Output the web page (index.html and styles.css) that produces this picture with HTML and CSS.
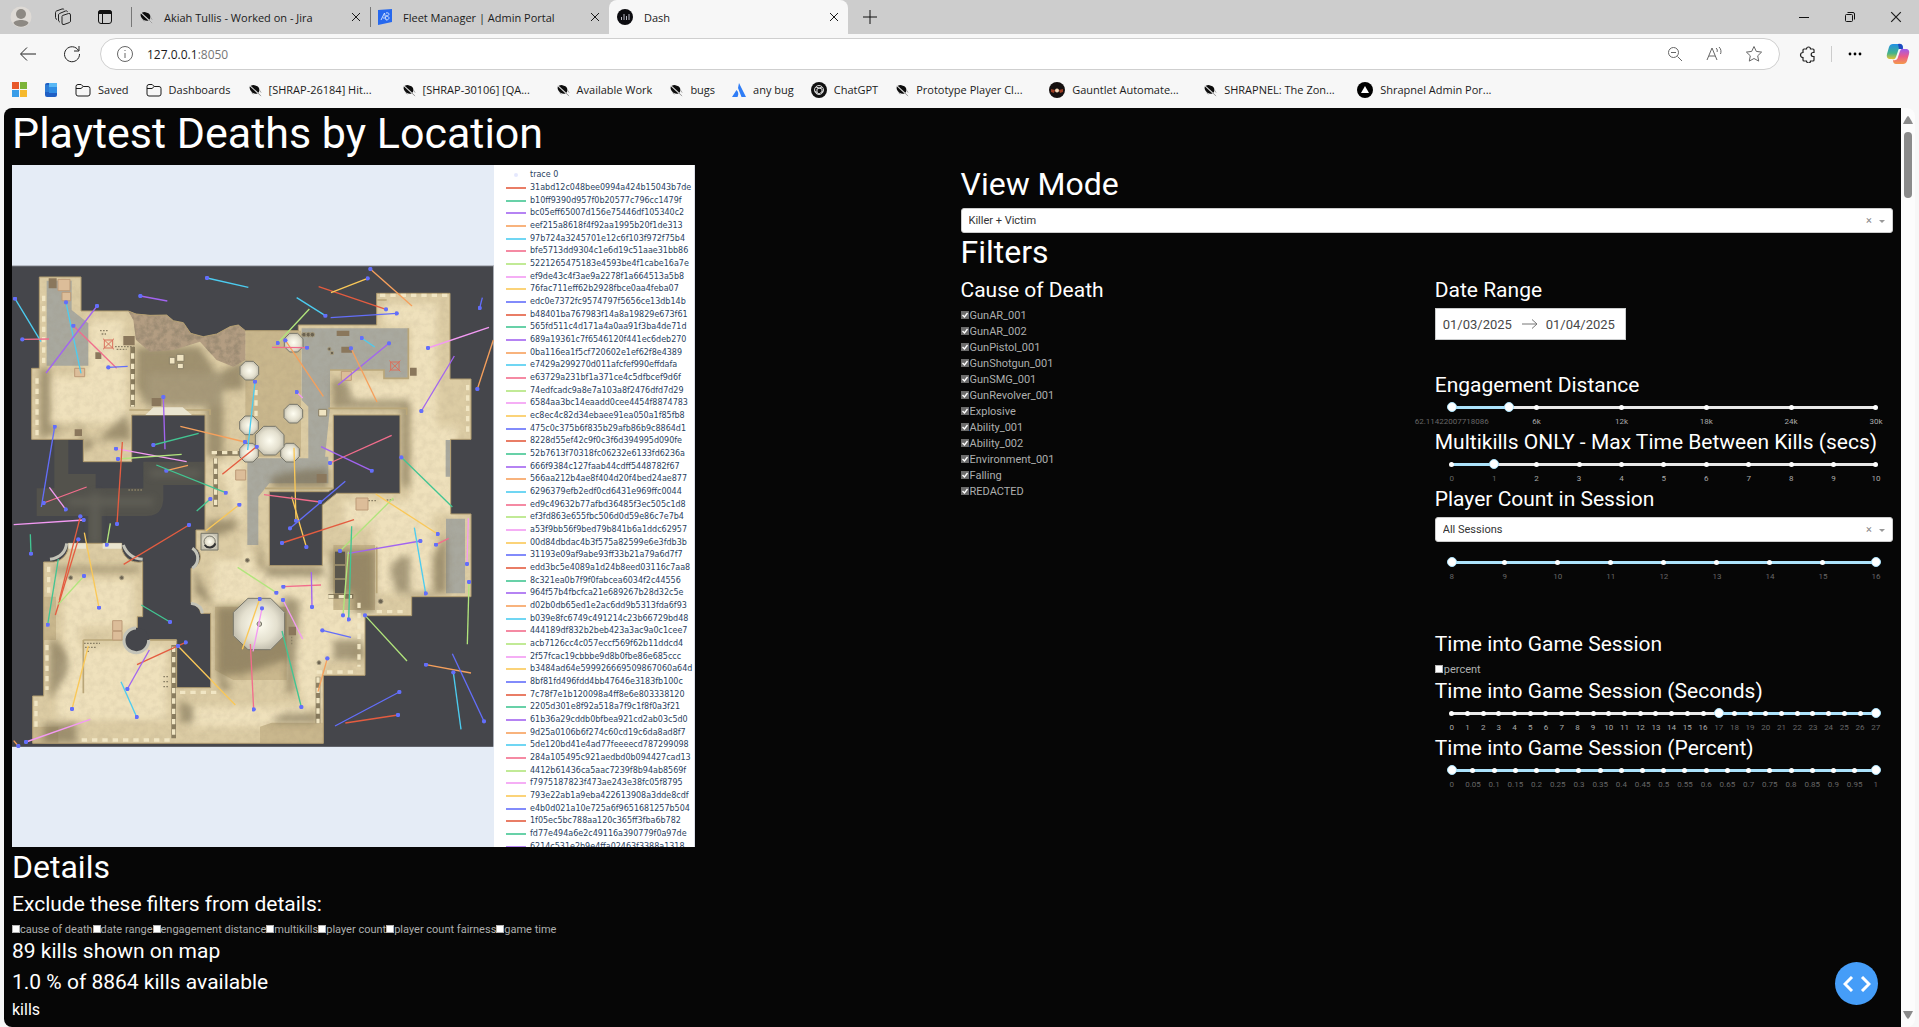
FILE: index.html
```html
<!DOCTYPE html>
<html lang="en">
<head>
<meta charset="utf-8">
<title>Dash</title>
<link rel="stylesheet" href="styles.css">
</head>
<body>
<svg class="defs" aria-hidden="true">
  <defs>
    <symbol id="close" viewBox="0 0 10 10"><path d="M1 1l8 8M9 1l-8 8" stroke="currentColor" fill="none"/></symbol>
    <symbol id="folder" viewBox="0 0 16 16"><path d="M1 4.500a2 2 0 0 1 2-2h3.200l2 2H13a2 2 0 0 1 2 2v5.500a2 2 0 0 1-2 2H3a2 2 0 0 1-2-2zM1 6.500h5l2.200-2" stroke="currentColor" fill="none"/></symbol>
    <symbol id="shard" viewBox="0 0 16 16"><path d="M2 4q3-3 7-1 4 1 4 5 0 3-2 4-3 1-6-1-4-3-3-7z" fill="#0d0d0d"/><path d="M2 3l12 11" stroke="#ddd" stroke-width="1.200"/><path d="M11 11l4 4M4 11l2 2M13 8l2 3" stroke="#999" fill="none"/></symbol>
  </defs>
</svg>
<header class="chrome">
  <div class="tabbar">
    <button class="icon-btn" aria-label="Profile"><svg width="22" height="22" viewBox="0 0 22 22"><circle cx="11" cy="11" r="10.500" fill="#dedad5"/><circle cx="11" cy="8" r="5" fill="#8d8983"/><path d="M3.500 17c1-4 14-4 15 0-3 5-12 5-15 0" fill="#8d8983"/></svg></button>
    <button class="icon-btn" aria-label="Workspaces"><svg width="18" height="18" viewBox="0 0 18 18" fill="none" stroke="#222"><path d="M8.500 7.500l6-2q2-.5 2 1.500v6q0 1-1 1.500l-5.500 2q-2 .5-2-1.500V8.500q0-.7.500-1zM6 14l-.5-.2Q4.500 13.500 4.500 12V7q0-1 1-1.500l6-2.500q1.500-.5 2.200.8M3 11.500Q1.500 11 1.500 9.500v-5q0-1 1-1.500l5.500-2q1.500-.5 2.200.8"/></svg></button>
    <button class="icon-btn" aria-label="Tab actions"><svg width="16" height="16" viewBox="0 0 16 16"><rect x="1.500" y="1.500" width="13" height="13" rx="2.500" fill="none" stroke="#111"/><path d="M1 4q0-3 3-3h8q3 0 3 3v1H1z" fill="#111"/><path d="M5.500 5v10" stroke="#111"/></svg></button>
    <div class="tab tab-line"><svg width="14" height="14"><use href="#shard"/></svg><span>Akiah Tullis - Worked on - Jira</span><button aria-label="Close tab"><svg width="10" height="10"><use href="#close"/></svg></button></div>
    <div class="tab tab-line"><svg width="14" height="16" viewBox="0 0 14 16"><path d="M0 1l14-1v13L0 16z" fill="#2668ee"/><path d="M3 11l3.500-7L8 11M5 9h2M8 4c4-1 4 3 0 3 4 0 4 4 0 4" stroke="#cfe0ff" fill="none"/></svg><span>Fleet Manager | Admin Portal</span><button aria-label="Close tab"><svg width="10" height="10"><use href="#close"/></svg></button></div>
    <div class="tab tab-active"><svg width="16" height="16" viewBox="0 0 16 16"><circle cx="8" cy="8" r="8" fill="#0c0c10"/><path d="M4.500 11V8M7 11V5M9.500 11V7M12 11V5" stroke="#b9b9c4"/></svg><span>Dash</span><button aria-label="Close tab"><svg width="10" height="10"><use href="#close"/></svg></button></div>
    <button class="new-tab" aria-label="New tab"><svg width="14" height="14" viewBox="0 0 14 14"><path d="M7 0v14M0 7h14" stroke="#111"/></svg></button>
    <div class="window-controls">
      <button aria-label="Minimize"><svg width="12" height="12" viewBox="0 0 12 12"><path d="M1 6.500h10" stroke="#111"/></svg></button>
      <button aria-label="Restore"><svg width="12" height="12" viewBox="0 0 12 12" fill="none" stroke="#111"><rect x="1.500" y="3.500" width="7" height="7" rx="1"/><path d="M3.500 1.500H9A1.500 1.500 0 0 1 10.500 3v5.500"/></svg></button>
      <button aria-label="Close"><svg width="12" height="12"><use href="#close"/></svg></button>
    </div>
  </div>
  <div class="toolbar">
    <button aria-label="Back"><svg width="18" height="16" viewBox="0 0 18 16"><path d="M17 8H2M8 1.500L1.500 8 8 14.500" fill="none" stroke="#222"/></svg></button>
    <button aria-label="Refresh"><svg width="18" height="18" viewBox="0 0 18 18"><path d="M15.500 5.500A7.500 7.500 0 1 0 16.500 9M16 1v5h-5" fill="none" stroke="#222"/></svg></button>
    <div class="address">
      <svg width="16" height="16" viewBox="0 0 16 16" fill="none" stroke="#666"><circle cx="8" cy="8" r="7.500"/><path d="M8 7v5M8 4v1"/></svg>
      <span class="url">127.0.0.1<span>:8050</span></span>
      <svg width="16" height="16" viewBox="0 0 16 16" fill="none" stroke="#666"><circle cx="6.500" cy="6.500" r="5"/><path d="M4 6.500h5M10.500 10.500L15 15"/></svg>
      <svg width="18" height="16" viewBox="0 0 18 16" fill="none" stroke="#666"><path d="M2 14L7 2l5 12M4 10h6M11 2c1.500 1.200 1.500 3 1 4M14 1c2.300 2 2.300 5 1.500 7"/></svg>
      <svg width="18" height="18" viewBox="0 0 18 18" fill="none" stroke="#666"><path d="M9 1.500l2.300 4.900 5.300.7-3.900 3.700 1 5.300L9 13.500l-4.700 2.600 1-5.300L1.400 7.100l5.300-.7z"/></svg>
    </div>
    <button aria-label="Extensions"><svg width="18" height="18" viewBox="0 0 18 18"><path d="M5 4h2.500a2 2 0 0 1 4 0H14q1 0 1 1v2.500h-.8a1.800 1.800 0 0 0 0 4h.8V15q0 1-1 1h-2.500a2 2 0 0 1-4 0H5q-1 0-1-1v-2.500a2.500 2.500 0 0 1 0-5V5q0-1 1-1z" fill="none" stroke="#222" stroke-width="1.200"/></svg></button>
    <i class="rule"></i>
    <button aria-label="Settings and more"><svg width="14" height="4" viewBox="0 0 14 4"><circle cx="2" cy="2" r="1.400"/><circle cx="7" cy="2" r="1.400"/><circle cx="12" cy="2" r="1.400"/></svg></button>
    <button aria-label="Copilot"><svg width="24" height="22" viewBox="0 0 24 22"><defs><linearGradient id="cpa" x1="0" y1="0" x2="0" y2="1"><stop offset="0" stop-color="#2190e6"/><stop offset=".6" stop-color="#43b38a"/><stop offset="1" stop-color="#e8c432"/></linearGradient><linearGradient id="cpb" x1="0" y1="0" x2="0" y2="1"><stop offset="0" stop-color="#9a5cf0"/><stop offset=".5" stop-color="#ea5a8c"/><stop offset="1" stop-color="#f59a4a"/></linearGradient></defs><path d="M7 1h7q3 0 3 4-4-1-5 3l-2 6q-1 3-4 2H3q-3-1-2-5l2-7q1-3 4-3z" fill="url(#cpa)"/><path d="M12 1q5-1 5 5h-4z" fill="#1f49c0"/><path d="M17 21h-7q-3 0-3-4 4 1 5-3l2-6q1-3 4-2h3q3 1 2 5l-2 7q-1 3-4 3z" fill="url(#cpb)"/></svg></button>
  </div>
  <nav class="bookmarks" aria-label="Favorites">
    <a href="#" aria-label="Microsoft"><svg width="15" height="15" viewBox="0 0 15 15"><path d="M0 0h7v7H0z" fill="#e8592b"/><path d="M8 0h7v7H8z" fill="#7cb338"/><path d="M0 8h7v7H0z" fill="#3a9de8"/><path d="M8 8h7v7H8z" fill="#f6b92d"/></svg></a>
    <a href="#" aria-label="Device"><svg width="14" height="16" viewBox="0 0 14 16"><rect x="1" y="1" width="12" height="14" rx="2" fill="#1f5fc4"/><path d="M5 1h8v4H5z" fill="#59b8f5"/><path d="M5 5h8v6H5z" fill="#2f8de4"/><path d="M1 3h4v7H1z" fill="#2d7bd4"/></svg></a>
    <a href="#"><svg width="16" height="16"><use href="#folder"/></svg>Saved</a>
    <a href="#"><svg width="16" height="16"><use href="#folder"/></svg>Dashboards</a>
    <a href="#" class="long"><svg width="14" height="14"><use href="#shard"/></svg>[SHRAP-26184] Hit...</a>
    <a href="#" class="long"><svg width="14" height="14"><use href="#shard"/></svg>[SHRAP-30106] [QA...</a>
    <a href="#"><svg width="14" height="14"><use href="#shard"/></svg>Available Work</a>
    <a href="#"><svg width="14" height="14"><use href="#shard"/></svg>bugs</a>
    <a href="#"><svg width="14" height="14" viewBox="0 0 14 14"><path d="M7 0l7 14H9.500L6 5zM4.500 7q3 3 1 7H0z" fill="#2f7df6"/></svg>any bug</a>
    <a href="#"><svg width="16" height="16" viewBox="0 0 16 16"><circle cx="8" cy="8" r="8" fill="#111"/><g fill="none" stroke="#ddd"><circle cx="8" cy="8" r="4.500"/><path d="M5 5l6 2v4M11 5L6 7v5M4 9l4 3 4-3"/></g></svg>ChatGPT</a>
    <a href="#" class="long"><svg width="14" height="14"><use href="#shard"/></svg>Prototype Player Cl...</a>
    <a href="#" class="long"><svg width="16" height="16" viewBox="0 0 16 16"><circle cx="8" cy="8" r="8" fill="#151010"/><path d="M2 7l4 1-1 3-3-1zM14 7l-4 1 1 3 3-1z" fill="#9b3b22"/><circle cx="8" cy="8.500" r="2" fill="#f6d7b8"/></svg>Gauntlet Automate...</a>
    <a href="#" class="long"><svg width="14" height="14"><use href="#shard"/></svg>SHRAPNEL: The Zon...</a>
    <a href="#"><svg width="16" height="16" viewBox="0 0 16 16"><circle cx="8" cy="8" r="8"/><path d="M8 4l4 7H4z" fill="#fff"/></svg>Shrapnel Admin Por...</a>
  </nav>
</header>
<div class="viewport">
<main class="page">
  <h1>Playtest Deaths by Location</h1>
  <div class="columns">
    <section class="left">
      <div class="figure">
        <svg class="map" viewBox="36 15 1446 2043" role="img" aria-label="Map of kills by location">
          <defs>
            <marker id="dot" viewBox="-6 -6 12 12" markerWidth="13" markerHeight="13" markerUnits="userSpaceOnUse"><circle r="6" fill="#636efa"/></marker>
            <filter id="soft" x="-20%" y="-20%" width="140%" height="140%"><feGaussianBlur stdDeviation="11"/></filter>
            <filter id="rough" x="0" y="0" width="100%" height="100%"><feTurbulence type="fractalNoise" baseFrequency=".05" numOctaves="4"/><feColorMatrix values="0 0 0 0 .3  0 0 0 0 .24  0 0 0 0 .16  0 2 0 0 -.75"/><feComposite in2="SourceGraphic" operator="in"/></filter>
            <radialGradient id="domefill"><stop offset="0" stop-color="#fffef2"/><stop offset=".7" stop-color="#e4e0cf"/><stop offset="1" stop-color="#c6c2b2"/></radialGradient>
            <path id="land" fill-rule="evenodd" d="M118 351H243V453H385L408 462 450 466 500 465 520 482 550 488 572 520 610 530 650 522 690 500 715 495 736 512H895V495H1130V400H1350V657H1413V838H1352V1062H1413V1310H1235V1367H1095V1546H970V1750H98V1608H131V1206H150A50 50 0 0 0 205 1150H365A50 50 0 0 0 428 1205V1370H412V1440H530V1583H632V1360H603A40 40 0 0 0 573 1330V1225A34 34 0 0 0 588 1165V1110H615V765H395V905H250V838H95V625H118ZM1000 765H1200V1000H1010L967 1035V1217H808V995H985L1000 985Z"/>
            <clipPath id="landclip"><path clip-rule="evenodd" d="M118 351H243V453H385L408 462 450 466 500 465 520 482 550 488 572 520 610 530 650 522 690 500 715 495 736 512H895V495H1130V400H1350V657H1413V838H1352V1062H1413V1310H1235V1367H1095V1546H970V1750H98V1608H131V1206H150A50 50 0 0 0 205 1150H365A50 50 0 0 0 428 1205V1370H412V1440H530V1583H632V1360H603A40 40 0 0 0 573 1330V1225A34 34 0 0 0 588 1165V1110H615V765H395V905H250V838H95V625H118ZM1000 765H1200V1000H1010L967 1035V1217H808V995H985L1000 985Z"/></clipPath>
          </defs>
          <rect x="36" y="15" width="1446" height="2043" fill="#e5ecf6"/>
          <path d="M36 316H1482V1760H36z" fill="#a9adb5"/>
          <path d="M36 319H1479V1760H36z" fill="#45464b"/>
          <path d="M163 835H205V942H287V985H430V905H615V975H490V1020Q486 1068 440 1068H305V1155H265V1068H110V985H163Z" fill="#53524c"/>
          <path d="M205 1025H460M285 1000V1150M450 940H600" stroke="#69675d" stroke-width="24" opacity=".6" filter="url(#soft)"/>
          <use href="#land" fill="#dccca4"/>
          <g clip-path="url(#landclip)">
            <g fill="#efe1bc" filter="url(#soft)"><path d="M270 480H370V620H380V790H150V650H260zM440 640H670V740H440zM1150 430H1310V800H1370V1060H1230V740H1020V660H1230V500H1150zM190 1260H400V1400H240V1460H500V1680H170V1500H190zM650 900H730V1200H640V1330H780V1230H960V1200H1120V1100H1030V1020H1300V1300H1130V1460H960V1640H560V1700H940M870 1300H1060V1500H870z"/></g>
            <g fill="#c9b78d"><path d="M736 512H903V890H736zM645 1340H860V1560H700L645 1530zM780 1700L815 1688H970V1750H780zM1000 1155H1125V1350H1000zM98 1700H175V1750H98zM131 1310H168V1440H131z"/></g>
            <g fill="#a9a99f"><path d="M140 362H215V450L265 490V617H140zM905 505H1225V657H1152V630H990V745L975 890H985V970H808L775 1010V1155H742V895H925V740L905 720zM1338 1076H1395V1300H1338zM1337 840H1352V950H1337z"/></g>
            <g fill="#776a4e" opacity=".6" filter="url(#soft)"><path d="M408 560L600 560 650 640 735 600 730 690 670 690V890H620V740H440L408 680zM995 660H1040L1060 720H1230V980H1205V745H1000zM120 625H150V800H250V840H395L380 760 250 880 235 790 120 835zM775 1130V1220H970V1250H800zM1170 1230Q1190 1180 1230 1190V1310H1300V1190L1340 1120V1300H1190zM160 1220H420V1235H160zM990 1170H1125V1360H1060V1300H990zM810 960Q830 930 985 925V985H820zM585 1300V1225L640 1340H850V1310L900 1320 880 1600H860V1500L720 1545H650V1340H640zM170 1440Q230 1500 190 1560L150 1620V1440zM130 1690H230V1750H130zM540 1690H580V1640L540 1620zM1000 1440H1090V1500H1000zM810 1690L850 1660H950V1690zM655 1530L700 1590H660zM620 1080H720L700 1110 620 1140z"/></g>
            <path d="M385 453L450 466 500 465 520 482 550 488 572 520 610 530 650 522 690 500 715 495 736 512V600L700 620 650 600 600 545 520 570 450 575 408 540 400 480Z" fill="#b39d82"/>
            <path d="M385 453L450 466 500 465 520 482 550 488 572 520 610 530 650 522 690 500 715 495 736 512V600L700 620 650 600 600 545 520 570 450 575 408 540 400 480Z" filter="url(#rough)"/>
            <path d="M90 340H1420V1760H90z" filter="url(#rough)" opacity=".12"/>
          </g>
          <use href="#land" fill="none" stroke="#b09c70" stroke-width="3"/>
          <g fill="none" stroke="#6f6348" stroke-width="14" opacity=".75"><path d="M398 560V740M647 895V1040M521 1455V1735M954 1550V1690M985 1309H1060M647 880H720"/></g>
          <g fill="none" stroke="#b9a679" stroke-width="5"><path d="M388 750H630V765M985 745H1220V765M1132 420H1160M990 630H1152V655H1225V505M250 1440H530M250 1440V1600M795 985H1000M1130 1160V1300"/></g>
          <g fill="none" stroke="#f1e6c4" stroke-width="10" stroke-dasharray="16 15"><path d="M131 407V610M111 655V830M398 580V740M768 690V780M1403 675V820M647 895V1040M1140 406H1345M146 1220V1310M141 1455V1590M108 1622V1705M521 1460V1735M245 1740H510M1077 1328V1520M950 1536H1062M954 1552V1690M540 1597H655M985 1310H1056M1130 1355H1215M635 878H715"/></g>
          <circle cx="410" cy="1441" r="38" fill="#45464b"/>
          <g fill="none" stroke="#c3c3b8" stroke-width="9"><path d="M150 1198Q195 1190 200 1150M370 1155Q385 1195 428 1198M408 1404A37 37 0 1 0 446 1440M577 1165A36 36 0 0 1 577 1225M573 1330Q605 1335 607 1360"/></g>
          <path d="M205 1150H258V1166H205zM308 1150H365V1166H308zM436 765L460 742H548L576 765z" fill="#e9e4cf"/>
          <path d="M1005 1175H1035V1300H1005z" fill="#5a564c"/><path d="M1005 1215H1035M1005 1257H1035" stroke="#a59670" stroke-width="5"/>
          <g fill="#dcbd99" stroke="#bd9b78" stroke-width="3"><path d="M174 358H210V392H174zM186 397H212V422H186zM224 625H254V650H224zM1024 634H1054V661H1024zM707 930H737V960H707zM338 1382H366V1412H338zM338 1414H366V1440H338zM1068 1014H1104V1050H1068z"/></g>
          <g fill="#8a775c"><path d="M146 355H170V385H146zM224 808H246V828H224zM286 577H304V597H286zM1230 623H1250V647H1230zM1010 512H1048V528H1010zM1024 560H1056V578H1024zM950 942H980V968H950zM866 1400H888V1426H866zM370 528H404V556H370zM455 714H484V738H455z"/></g>
          <g fill="none" stroke="#d9705c" stroke-width="3"><path d="M313 540H338V564H313zM309 536L342 568M342 536L309 568M1172 606H1197V630H1172zM1168 602L1201 634M1201 602L1168 634"/></g>
          <g stroke="#8b8066" stroke-width="4" stroke-dasharray="5 4" fill="none"><path d="M300 512H325M305 522H318M345 560H400M350 568H380M252 1450H300M255 1462H290M262 1474H270M490 1550H508M490 1565H508M490 1580H508M875 1430V1455M1105 1022H1130M1160 1020H1180M385 990H430"/></g>
          <path d="M508 592H525V612H508zM530 583H552V604H530zM532 610H550V626H532zM956 748H980V768H956z" fill="#f0e4c2" stroke="#8b8066" stroke-width="3"/>
          <g fill="url(#domefill)" stroke="#77766a" stroke-width="3"><path id="dome" d="M869 520H893L909 536V560L893 576H869L853 560V536Z"/><use href="#dome" x="-133" y="84"/><use href="#dome" x="-1" y="213"/><use href="#dome" x="-134" y="248"/><use href="#dome" x="-134" y="330"/><use href="#dome" x="-11" y="330"/><path d="M791 799H827L852 824V860L827 885H791L766 860V824Z"/><path d="M744 1315H812L854 1357V1427L812 1469H744L700 1427V1357Z"/><circle cx="778" cy="1392" r="7" fill="#d0cbbb"/><path d="M603 1120H654V1170H603z"/><circle cx="629" cy="1145" r="17"/></g>
          <path d="M614 1155A18 18 0 0 0 646 1150" fill="none" stroke="#333" stroke-width="6"/>
          <g fill="#6c6351" stroke="#a59b80" stroke-width="3"><circle cx="742" cy="1201" r="6"/><circle cx="212" cy="1253" r="6"/><circle cx="365" cy="1253" r="6"/><circle cx="1142" cy="1324" r="7"/><circle cx="957" cy="1508" r="6"/><circle cx="988" cy="567" r="5"/><circle cx="996" cy="579" r="5"/><circle cx="912" cy="524" r="7"/><circle cx="925" cy="524" r="7"/><circle cx="937" cy="524" r="7"/></g>
          <g class="traces">
            <path class="c5" d="M45 416L123 545"/><path class="c6" d="M67 538L147 537"/><path class="c5" d="M198 427L243 640"/><path class="c6" d="M220 497L350 625"/><path class="c3" d="M291 438L138 639"/><path class="c0" d="M325 622L383 619"/><path class="c3" d="M421 408L502 423"/><path class="c5" d="M621 354L745 382"/><path class="c3" d="M490 711L495 868"/><path class="c2" d="M460 855L596 820"/><path class="c0" d="M164 800L124 1041"/><path class="c8" d="M348 866L560 905"/><path class="c7" d="M354 897L545 883"/><path class="c4" d="M735 846L541 799"/><path class="c5" d="M765 665L743 870"/><path class="c1" d="M770 860L667 943"/><path class="c7" d="M833 549L928 447"/><path class="c4" d="M856 541L970 709"/><path class="c6" d="M921 563L816 562"/><path class="c8" d="M890 696L908 714"/><path class="c5" d="M976 467L890 413"/><path class="c1" d="M1158 448L956 380"/><path class="c0" d="M1190 460L992 473"/><path class="c9" d="M1103 355L993 398"/><path class="c4" d="M1111 327L1236 438"/><path class="c5" d="M1085 534L1124 561"/><path class="c3" d="M1167 550L1014 675"/><path class="c4" d="M1053 565L1131 726"/><path class="c8" d="M1284 564L1467 502"/><path class="c3" d="M1264 753L1363 588"/><path class="c4" d="M1432 687L1480 540"/><path class="c0" d="M1439 444L1447 413"/><path class="c6" d="M990 909L1175 826"/><path class="c3" d="M1115 932L963 860"/><path class="c2" d="M1204 892L1357 1041"/>
          </g>
          <g class="traces" transform="translate(0 870)">
            <path class="c6" d="M131 159L260 111"/><path class="c8" d="M197 178L148 112"/><path class="c1" d="M351 222L367 -24"/><path class="c4" d="M499 62L564 46"/><path class="c2" d="M677 128L469 45"/><path class="c2" d="M631 147L590 183"/><path class="c9" d="M718 164L618 242"/><path class="c1" d="M567 225L371 343"/><path class="c8" d="M251 210L41 224"/><path class="c1" d="M241 199L178 450"/><path class="c1" d="M235 268L166 495"/><path class="c7" d="M320 284L331 220"/><path class="c2" d="M93 311L91 253"/><path class="c9" d="M297 473L253 248"/><path class="c7" d="M252 378L175 463"/><path class="c2" d="M143 524L175 327"/><path class="c2" d="M510 516L424 465"/><path class="c1" d="M557 577L411 644"/><path class="c9" d="M534 588L706 765"/><path class="c3" d="M382 717L448 600"/><path class="c5" d="M410 801L363 695"/><path class="c9" d="M216 777L265 588"/><path class="c8" d="M78 876L271 808"/><path class="c4" d="M55 888L41 872"/><path class="c9" d="M888 212L882 -7"/><path class="c9" d="M919 291L875 140"/><path class="c6" d="M960 156L792 134"/><path class="c0" d="M870 235L1036 94"/><path class="c1" d="M846 279L1062 209"/><path class="c7" d="M1020 303L1180 144"/><path class="c9" d="M1313 252L1127 132"/><path class="c3" d="M1261 273L1041 311"/><path class="c6" d="M1308 284L1346 265"/><path class="c5" d="M1277 430L1243 233"/><path class="c8" d="M1401 342L1405 205"/><path class="c7" d="M1407 396L1402 583"/><path class="c7" d="M1029 496L1045 305"/><path class="c2" d="M1046 508L1055 229"/><path class="c6" d="M850 410L963 405"/><path class="c3" d="M936 471L934 366"/><path class="c7" d="M829 428L713 352"/><path class="c8" d="M849 450L908 567"/><path class="c9" d="M779 447L727 598"/><path class="c8" d="M786 475L759 604"/><path class="c6" d="M761 778L751 582"/><path class="c2" d="M904 771L846 543"/><path class="c0" d="M967 541L1053 562"/><path class="c7" d="M1095 496L1221 633"/><path class="c4" d="M982 625L954 725"/><path class="c4" d="M1278 644L1413 669"/><path class="c0" d="M1452 814L1357 611"/><path class="c5" d="M1360 667L1383 838"/><path class="c0" d="M1198 726L1005 828"/><path class="c1" d="M1194 795L1036 819"/>
          </g>
        </svg>
        <ul class="legend">
          <li class="points">trace 0</li>
          <li>31abd12c048bee0994a424b15043b7de</li><li>b10ff9390d957f0b20577c796cc1479f</li><li>bc05eff65007d156e75446df105340c2</li><li>eef215a8618f4f92aa1995b20f1de313</li><li>97b724a3245701e12c6f103f972f75b4</li><li>bfe5713dd9304c1e6d19c51aae31bb86</li><li>5221265475183e4593be4f1cabe16a7e</li><li>ef9de43c4f3ae9a2278f1a664513a5b8</li><li>76fac711eff62b2928fbce0aa4feba07</li><li>edc0e7372fc9574797f5656ce13db14b</li>
          <li>b48401ba767983f14a8a19829e673f61</li><li>565fd511c4d171a4a0aa91f3ba4de71d</li><li>689a19361c7f6546120f441ec6deb270</li><li>0ba116ea1f5cf720602e1ef62f8e4389</li><li>e7429a299270d011afcfef990effdafa</li><li>e63729a231bf1a371ce4c5dfbcef9d6f</li><li>74edfcadc9a8e7a103a8f2476dfd7d29</li><li>6584aa3bc14eaadd0cee4454f8874783</li><li>ec8ec4c82d34ebaee91ea050a1f85fb8</li><li>475c0c375b6f835b29afb86b9c8864d1</li>
          <li>8228d55ef42c9f0c3f6d394995d090fe</li><li>52b7613f70318fc06232e6133fd6236a</li><li>666f9384c127faab44cdff5448782f67</li><li>566aa212b4ae8f404d20f4bed24ae877</li><li>6296379efb2edf0cd6431e969ffc0044</li><li>ed9c49632b77afbd36485f3ec505c1d8</li><li>ef3fd863e655fbc506d0d59e86c7e7b4</li><li>a53f9bb56f9bed79b841b6a1ddc62957</li><li>00d84dbdac4b3f575a82599e6e3fdb3b</li><li>31193e09af9abe93ff33b21a79a6d7f7</li>
          <li>edd3bc5e4089a1d24b8eed03116c7aa8</li><li>8c321ea0b7f9f0fabcea6034f2c44556</li><li>964f57b4fbcfca21e689267b28d32c5e</li><li>d02b0db65ed1e2ac6dd9b5313fda6f93</li><li>b039e8fc6749c491214c23b66729bd48</li><li>444189df832b2beb423a3ac9a0c1cee7</li><li>acb7126cc4c057eccf569f62b11ddcd4</li><li>2f57fcac19cbbbe9d8b0fbe86e685ccc</li><li>b3484ad64e599926669509867060a64d</li><li>8bf81fd496fdd4bb47646e3183fb100c</li>
          <li>7c78f7e1b120098a4ff8e6e803338120</li><li>2205d301e8f92a518a7f9c1f8f0a3f21</li><li>61b36a29cddb0bfbea921cd2ab03c5d0</li><li>9d25a0106b6f274c60cd19c6da8ad8f7</li><li>5de120bd41e4ad77feeeecd787299098</li><li>284a105495c921aedbd0b094427cad13</li><li>4412b61436ca5aac7239f8b94ab8569f</li><li>f7975187823f473ae243e38fc05f8795</li><li>793e22ab1a9eba422613908a3dde8cdf</li><li>e4b0d021a10e725a6f9651681257b504</li>
          <li>1f05ec5bc788aa120c365ff3fba6b782</li><li>fd77e494a6e2c49116a390779f0a97de</li><li>6214c531e2b9e4ffa02463f3388a1318</li>
        </ul>
      </div>
      <h2>Details</h2>
      <h4 class="spaced">Exclude these filters from details:</h4>
      <div class="checks inline">
        <label><input type="checkbox">cause of death</label><label><input type="checkbox">date range</label><label><input type="checkbox">engagement distance</label><label><input type="checkbox">multikills</label><label><input type="checkbox">player count</label><label><input type="checkbox">player count fairness</label><label><input type="checkbox">game time</label>
      </div>
      <h4>89 kills shown on map</h4>
      <h4 class="spaced">1.0 % of 8864 kills available</h4>
      <h5>kills</h5>
    </section>
    <section class="right">
      <h2>View Mode</h2>
      <div class="dropdown">
        <select aria-label="View Mode"><option>Killer + Victim</option></select>
        <button aria-label="Clear view mode">×</button><i></i>
      </div>
      <h2>Filters</h2>
      <div class="filters">
        <section>
          <h4>Cause of Death</h4>
          <div class="checks">
            <label><input type="checkbox" checked>GunAR_001</label>
            <label><input type="checkbox" checked>GunAR_002</label>
            <label><input type="checkbox" checked>GunPistol_001</label>
            <label><input type="checkbox" checked>GunShotgun_001</label>
            <label><input type="checkbox" checked>GunSMG_001</label>
            <label><input type="checkbox" checked>GunRevolver_001</label>
            <label><input type="checkbox" checked>Explosive</label>
            <label><input type="checkbox" checked>Ability_001</label>
            <label><input type="checkbox" checked>Ability_002</label>
            <label><input type="checkbox" checked>Environment_001</label>
            <label><input type="checkbox" checked>Falling</label>
            <label><input type="checkbox" checked>REDACTED</label>
          </div>
        </section>
        <section>
          <h4>Date Range</h4>
          <div class="dates">
            <input type="text" value="01/03/2025" aria-label="Start date">
            <svg width="16" height="10" viewBox="0 0 16 10"><path d="M0 5h15M10 .5L15 5l-5 4.500" fill="none" stroke="#777"/></svg>
            <input type="text" value="01/04/2025" aria-label="End date">
          </div>
          <h4>Engagement Distance</h4>
          <div class="slider" style="--from:0%;--to:13.400%">
            <div class="rail"></div>
            <ol><li class="on">62.11422007718086</li><li>6k</li><li>12k</li><li>18k</li><li>24k</li><li>30k</li></ol>
            <input type="range" min="0" max="1000" value="0" aria-label="Minimum engagement distance"><input type="range" min="0" max="1000" value="134" aria-label="Maximum engagement distance">
          </div>
          <h4>Multikills ONLY - Max Time Between Kills (secs)</h4>
          <div class="slider" style="--from:0%;--to:10%">
            <div class="rail"></div>
            <ol><li class="on">0</li><li class="on">1</li><li>2</li><li>3</li><li>4</li><li>5</li><li>6</li><li>7</li><li>8</li><li>9</li><li>10</li></ol>
            <input type="range" min="0" max="10" value="1" aria-label="Max time between kills">
          </div>
          <h4>Player Count in Session</h4>
          <div class="dropdown sessions">
            <select aria-label="Player Count in Session"><option>All Sessions</option></select>
            <button aria-label="Clear sessions">×</button><i></i>
          </div>
          <div class="slider players" style="--from:0%;--to:100%">
            <div class="rail"></div>
            <ol><li class="on">8</li><li class="on">9</li><li class="on">10</li><li class="on">11</li><li class="on">12</li><li class="on">13</li><li class="on">14</li><li class="on">15</li><li class="on">16</li></ol>
            <input type="range" min="8" max="16" value="8" aria-label="Minimum players"><input type="range" min="8" max="16" value="16" aria-label="Maximum players">
          </div>
          <h4>Time into Game Session</h4>
          <div class="checks"><label><input type="checkbox">percent</label></div>
          <h4>Time into Game Session (Seconds)</h4>
          <div class="slider" style="--from:62.963%;--to:100%">
            <div class="rail"></div>
            <ol><li>0</li><li>1</li><li>2</li><li>3</li><li>4</li><li>5</li><li>6</li><li>7</li><li>8</li><li>9</li><li>10</li><li>11</li><li>12</li><li>13</li><li>14</li><li>15</li><li>16</li><li class="on">17</li><li class="on">18</li><li class="on">19</li><li class="on">20</li><li class="on">21</li><li class="on">22</li><li class="on">23</li><li class="on">24</li><li class="on">25</li><li class="on">26</li><li class="on">27</li></ol>
            <input type="range" min="0" max="27" value="17" aria-label="From second"><input type="range" min="0" max="27" value="27" aria-label="To second">
          </div>
          <h4>Time into Game Session (Percent)</h4>
          <div class="slider" style="--from:0%;--to:100%">
            <div class="rail"></div>
            <ol><li class="on">0</li><li class="on">0.05</li><li class="on">0.1</li><li class="on">0.15</li><li class="on">0.2</li><li class="on">0.25</li><li class="on">0.3</li><li class="on">0.35</li><li class="on">0.4</li><li class="on">0.45</li><li class="on">0.5</li><li class="on">0.55</li><li class="on">0.6</li><li class="on">0.65</li><li class="on">0.7</li><li class="on">0.75</li><li class="on">0.8</li><li class="on">0.85</li><li class="on">0.9</li><li class="on">0.95</li><li class="on">1</li></ol>
            <input type="range" min="0" max="1" step="0.05" value="0" aria-label="From percent"><input type="range" min="0" max="1" step="0.05" value="1" aria-label="To percent">
          </div>
        </section>
      </div>
    </section>
  </div>
  <button class="debug" aria-label="Open debug menu"><svg width="28" height="16" viewBox="0 0 28 16"><path d="M9 1L2 8l7 7M19 1l7 7-7 7" fill="none" stroke="#fff" stroke-width="3"/></svg></button>
</main>
<div class="scrollbar" aria-hidden="true">
  <svg width="10" height="8" viewBox="0 0 10 8"><path d="M5 0q1 0 5 8H0Q4 0 5 0z" fill="#8b8b8b"/></svg>
  <i></i>
  <svg width="10" height="8" viewBox="0 0 10 8"><path d="M5 8q1 0 5-8H0Q4 8 5 8z" fill="#8b8b8b"/></svg>
</div>
</div>
</body>
</html>
```

FILE: styles.css
```css
* { box-sizing: border-box; }
body {
  margin: 0;
  height: 100vh;
  display: flex;
  flex-direction: column;
  background: #f7f7f7;
  font-family: Roboto, "Liberation Sans", sans-serif;
}
button { border: 0; padding: 0; background: none; color: inherit; font: inherit; display: flex; align-items: center; justify-content: center; }
svg { flex: none; display: block; }
.defs { width: 0; height: 0; position: absolute; }

/* Browser window */
.chrome { font-family: "Open Sans", "Noto Sans", sans-serif; font-size: 11px; color: #1b1b1b; flex: none; }
.tabbar { display: flex; align-items: center; height: 34px; background: #cdcdcd; }
.icon-btn { width: 42px; }
.tab { display: flex; align-items: center; gap: 11px; width: 239px; height: 34px; padding: 0 9px 0 8px; }
.tab span { flex: 1; white-space: nowrap; }
.tab-line { position: relative; }
.tab-line::before { content: ""; position: absolute; left: 0; top: 7px; height: 20px; width: 1px; background: #777; }
.icon-btn + .tab { margin-left: 5px; }
.tab-active { background: #f7f7f7; border-radius: 8px 8px 0 0; }
.new-tab { width: 44px; }
.window-controls { margin-left: auto; display: flex; }
.window-controls button { width: 46px; height: 34px; }
.toolbar { display: flex; align-items: center; height: 40px; padding-left: 6px; }
.toolbar > button { width: 44px; }
.toolbar > button:last-child { width: 42px; }
.address { flex: 1; display: flex; align-items: center; gap: 22px; height: 32px; margin: 0 6px; padding: 0 16px; border: 1px solid #cfcfcf; border-radius: 16px; background: #fff; }
.url { flex: 1; margin-left: -8px; font-size: 12px; }
.url span { color: #767676; }
.rule { width: 1px; height: 16px; background: #ccc; margin: 0 1px; }
.bookmarks { display: flex; align-items: center; gap: 17px; height: 34px; padding: 0 0 3px 12px; }
.bookmarks a { display: flex; align-items: center; gap: 7px; color: #1b1b1b; text-decoration: none; white-space: nowrap; }
.bookmarks .long { width: 137px; }

/* Page */
.viewport { flex: 1; min-height: 0; display: flex; margin: 0 4px; border-radius: 8px; overflow: hidden; background: #fcfcfc; }
.page { flex: 1; position: relative; overflow: hidden; padding: 0 8px; background: #060606; color: #fff; }
h1, h2, h4, h5 { margin: 0; font-weight: 400; }
h1 { font-size: 43px; line-height: 50px; margin-bottom: 7px; }
h2 { font-size: 32px; line-height: 38px; }
h4 { font-size: 21px; line-height: 26px; }
h5 { font-size: 16px; line-height: 20px; margin-top: 5px; }
.spaced { margin-top: 5px; }
.columns { display: grid; grid-template-columns: 1fr 1fr; gap: 16px; }
.figure { display: flex; width: 683px; height: 682px; overflow: hidden; background: #e5ecf6; margin-bottom: 1px; }
.map { width: 482px; height: 681px; }
.traces path { fill: none; stroke-width: 4; marker-start: url(#dot); }
.c0 { stroke: #636efa; }
.c1 { stroke: #e45c40; }
.c2 { stroke: #42c592; }
.c3 { stroke: #a264f0; }
.c4 { stroke: #f6a05c; }
.c5 { stroke: #4cccf0; }
.c6 { stroke: #f26d8c; }
.c7 { stroke: #b1e57c; }
.c8 { stroke: #f39af3; }
.c9 { stroke: #fac858; }
.legend { display: grid; grid-auto-rows: 12px 13px 13px; flex: 1; margin: 0; padding: 4px 0 0 12px; background: #fff; border-right: 1px solid #dcdfe8; list-style: none; font: 8px/12px "DejaVu Sans", Verdana, sans-serif; color: #2a3f5f; }
.legend li { display: flex; align-items: center; gap: 4px; white-space: nowrap; }
.legend li::before { content: ""; width: 20px; height: 2px; opacity: .8; background: #636efa; }
.legend li:nth-child(10n+2)::before { background: #e45c40; }
.legend li:nth-child(10n+3)::before { background: #42c592; }
.legend li:nth-child(10n+4)::before { background: #a264f0; }
.legend li:nth-child(10n+5)::before { background: #f6a05c; }
.legend li:nth-child(10n+6)::before { background: #4cccf0; }
.legend li:nth-child(10n+7)::before { background: #f26d8c; }
.legend li:nth-child(10n+8)::before { background: #b1e57c; }
.legend li:nth-child(10n+9)::before { background: #f39af3; }
.legend li:nth-child(10n+10)::before { background: #fac858; }
.legend .points::before { width: 4px; height: 4px; margin: 0 8px; border-radius: 50%; background: #dfe2fd; }

.checks { margin: 5px 0 0; font-size: 11px; line-height: 16px; color: #adafae; }
.checks label { display: flex; align-items: center; }
.checks.inline { display: flex; }
.checks input { appearance: none; flex: none; width: 8px; height: 8px; margin: 0 1px 2px 0; background: #fff; border: 1px solid #b5b5b5; }
.checks.inline input { margin-right: 0; }
.checks input:checked { border: 0; background: #6b6b6b url("data:image/svg+xml,%3Csvg xmlns='http://www.w3.org/2000/svg' viewBox='0 0 8 8'%3E%3Cpath d='M1.500 4l2 2L6.500 2' fill='none' stroke='%23fff' stroke-width='1.300'/%3E%3C/svg%3E"); }

.dropdown { display: flex; align-items: center; height: 25px; margin-top: 5px; padding-right: 7px; background: #fff; border: 1px solid #ccc; border-radius: 3px; color: #888; }
.dropdown select { appearance: none; flex: 1; height: 23px; border: 0; padding: 0 7px 1px; background: none; font: 11px Roboto, sans-serif; color: #333; }
.dropdown button { width: 12px; font-size: 11px; }
.dropdown i { margin: 2px 0 0 4px; border: 3px solid transparent; border-top-color: #999; border-bottom: 0; }
.filters { display: grid; grid-template-columns: 1fr 1fr; gap: 16px; margin-top: 6px; }
.dates { display: flex; align-items: center; width: 191px; height: 32px; margin: 5px 0 32px; padding: 0 7px; background: #fff; border: 1px solid #cacccd; }
.dates input { width: 79px; border: 0; padding: 0; background: none; font: 13px Roboto, sans-serif; color: #484848; }
.dates svg { margin-right: 8px; }

.slider { position: relative; height: 31px; padding: 8px 17px 0; }
.rail { height: 3px; border-radius: 2px; background: linear-gradient(90deg, #e9e9e9 var(--from), #abe2fb var(--from), #abe2fb var(--to), #e9e9e9 var(--to)); }
.slider ol { display: flex; justify-content: space-between; margin: -4px 0 0; padding: 0; list-style: none; font-size: 8px; line-height: 10px; color: #aaa; }
.slider li { display: flex; flex-direction: column; align-items: center; gap: 7px; width: 0; white-space: nowrap; }
.slider li::before { content: ""; width: 5px; height: 5px; border-radius: 50%; background: #fff; }
.slider .on { color: #666; }
.slider input { appearance: none; position: absolute; left: 12px; top: 4px; width: calc(100% - 24px); height: 10px; margin: 0; background: none; pointer-events: none; }
.slider input::-webkit-slider-thumb { appearance: none; width: 10px; height: 10px; border: 1px solid #abe2fb; border-radius: 50%; background: #fff; pointer-events: auto; }
.sessions { margin-bottom: 11px; }
.players { margin-bottom: 47px; }
.debug { position: absolute; right: 23px; bottom: 22px; width: 43px; height: 43px; border-radius: 50%; background: #459df8; }

.scrollbar { display: flex; flex-direction: column; align-items: center; width: 14px; padding: 8px 0; }
.scrollbar i { flex: none; width: 8px; height: 66px; margin: 8px 0 auto; border-radius: 4px; background: #8b8b8b; }
```
